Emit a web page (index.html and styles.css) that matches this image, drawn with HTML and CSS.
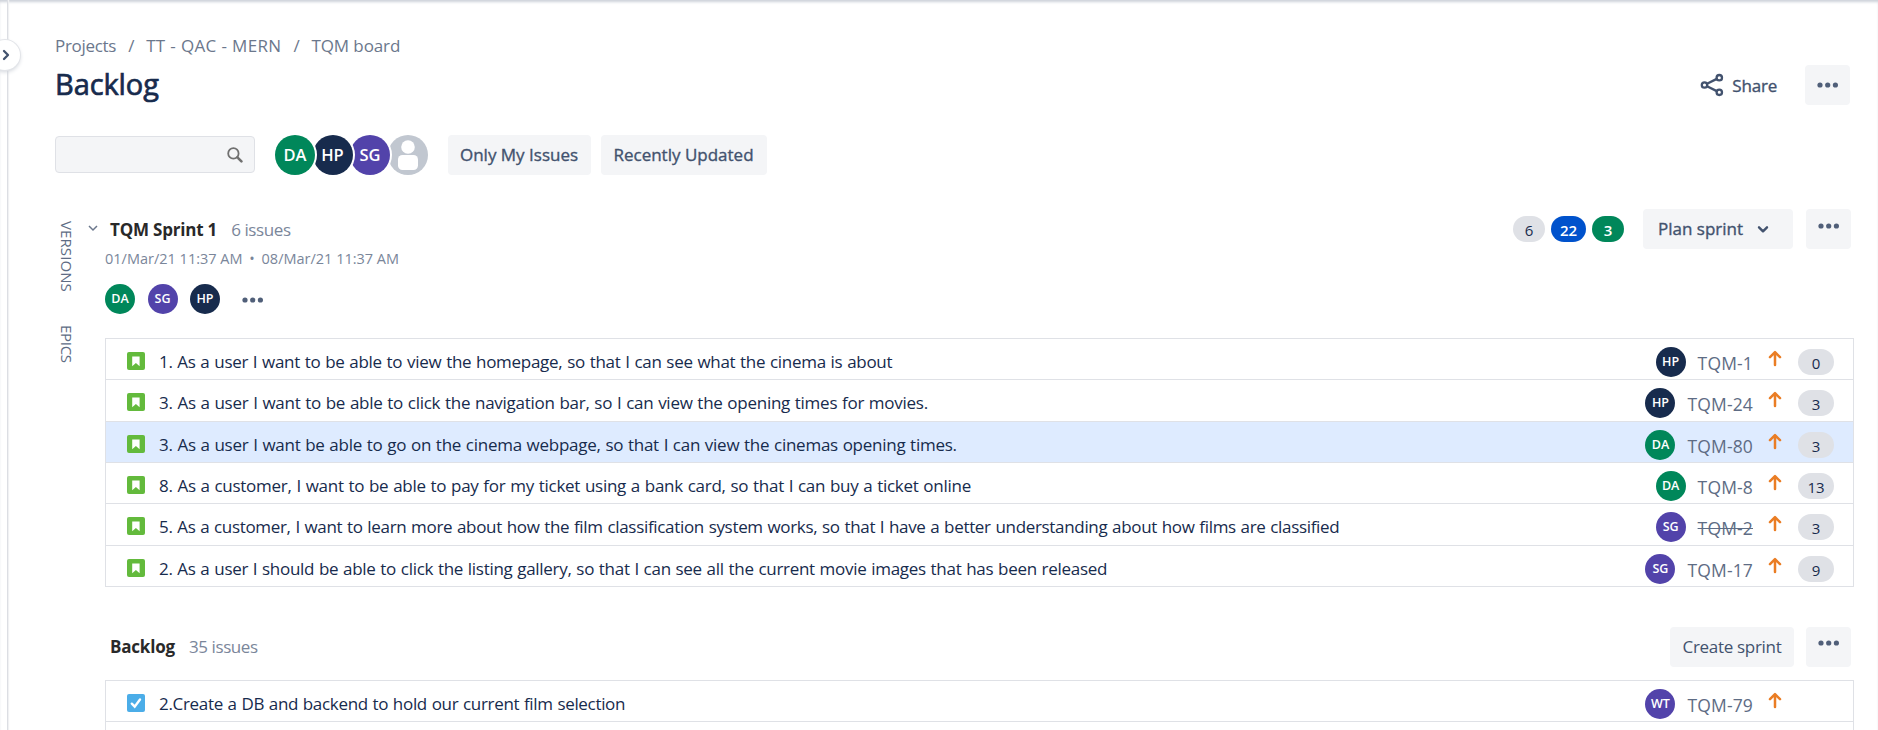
FILE: index.html
```html
<!DOCTYPE html>
<html lang="en">
<head>
<meta charset="utf-8">
<title>Backlog - TQM board</title>
<link rel="stylesheet" href="styles.css">
</head>
<body>
<svg class="defs" width="0" height="0">
  <symbol id="story" viewBox="0 0 18 18"><rect width="18" height="18" rx="2" fill="#63ba3c"/><path d="M5.2 4.4h7.4v9.8L8.9 10.900 5.2 14.200z" fill="#fff"/></symbol>
  <symbol id="task" viewBox="0 0 18 18"><rect width="18" height="18" rx="2" fill="#4bade8"/><path d="M4.800 9.700l2.900 3L13 5.500" fill="none" stroke="#fff" stroke-width="2.400" stroke-linecap="round"/></symbol>
  <symbol id="up" viewBox="0 0 14 17"><path d="M7 15V2.500M2 7.200l5-5 5 5" fill="none" stroke="#ea7d24" stroke-width="2.500" stroke-linecap="round" stroke-linejoin="round"/></symbol>
  <symbol id="dots" viewBox="0 0 22 6"><g fill="#505f79"><circle cx="3" cy="3" r="2.600"/><circle cx="10.700" cy="3" r="2.600"/><circle cx="18.400" cy="3" r="2.600"/></g></symbol>
</svg>
<div class="app">
  <aside class="rail"><button class="toggle" aria-label="Expand"><svg width="8" height="12" viewBox="0 0 8 12"><path d="M2 2l4 4-4 4" fill="none" stroke="#42526e" stroke-width="2.300" stroke-linecap="round" stroke-linejoin="round"/></svg></button></aside>
  <main class="main">
    <nav class="crumbs"><span class="c1">Projects</span><i>/</i><span class="c2">TT - QAC - MERN</span><i>/</i><span class="c3">TQM board</span></nav>
    <header class="head">
      <h1>Backlog</h1>
      <div class="share"><svg width="24" height="24" viewBox="0 0 24 24"><g fill="none" stroke="#42526e" stroke-width="2.300"><circle cx="4.500" cy="12" r="2.700"/><circle cx="19.300" cy="4.700" r="2.700"/><circle cx="19.300" cy="19.300" r="2.700"/><path d="M7 10.800l9.800-4.900M7 13.200l9.800 4.900"/></g></svg><span>Share</span></div>
      <button class="btn more"><svg class="dots"><use href="#dots"/></svg></button>
    </header>
    <div class="filters">
      <div class="search"><svg width="16" height="16" viewBox="0 0 16 16"><circle cx="6.400" cy="6.400" r="5.200" fill="none" stroke="#707070" stroke-width="1.800"/><path d="M10.400 10.400l4 4" stroke="#707070" stroke-width="2.600" stroke-linecap="round"/></svg></div>
      <div class="stack">
        <span class="av big da">DA</span><span class="av big hp">HP</span><span class="av big sg">SG</span><span class="av big none"><svg width="40" height="40" viewBox="0 0 40 40"><circle cx="20" cy="12" r="6.800" fill="#fff"/><rect x="10" y="20" width="20" height="15" rx="4.500" fill="#fff"/></svg></span>
      </div>
      <button class="btn only">Only My Issues</button>
      <button class="btn recent">Recently Updated</button>
    </div>
    <div class="board">
      <div class="tabs"><span>VERSIONS</span><span>EPICS</span></div>
      <div class="lists">
        <section>
          <div class="shead">
            <svg class="chev" width="12" height="8" viewBox="0 0 12 8"><path d="M2 2l4 4 4-4" fill="none" stroke="#6b778c" stroke-width="1.500"/></svg>
            <h2>TQM Sprint 1</h2><span class="count">6 issues</span>
            <div class="pills"><span class="pill">6</span><span class="pill blue">22</span><span class="pill green">3</span></div>
            <button class="btn plan">Plan sprint<svg width="12" height="9" viewBox="0 0 12 9"><path d="M2 2.300l4 4 4-4" fill="none" stroke="#42526e" stroke-width="2.400" stroke-linecap="round" stroke-linejoin="round"/></svg></button>
            <button class="btn more high"><svg class="dots"><use href="#dots"/></svg></button>
          </div>
          <div class="dates"><span>01/Mar/21 11:37 AM</span><b>•</b><span>08/Mar/21 11:37 AM</span></div>
          <div class="people"><span class="av da">DA</span><span class="av sg">SG</span><span class="av hp">HP</span><svg class="dots"><use href="#dots"/></svg></div>
          <ul class="issues">
            <li><svg class="type"><use href="#story"/></svg><span class="sum t1">1. As a user I want to be able to view the homepage, so that I can see what the cinema is about</span><span class="av hp">HP</span><span class="key">TQM-1</span><svg class="up"><use href="#up"/></svg><span class="pill">0</span></li>
            <li><svg class="type"><use href="#story"/></svg><span class="sum t2">3. As a user I want to be able to click the navigation bar, so I can view the opening times for movies.</span><span class="av hp">HP</span><span class="key">TQM-24</span><svg class="up"><use href="#up"/></svg><span class="pill">3</span></li>
            <li class="sel"><svg class="type"><use href="#story"/></svg><span class="sum t2">3. As a user I want be able to go on the cinema webpage, so that I can view the cinemas opening times.</span><span class="av da">DA</span><span class="key">TQM-80</span><svg class="up"><use href="#up"/></svg><span class="pill">3</span></li>
            <li><svg class="type"><use href="#story"/></svg><span class="sum t2">8. As a customer, I want to be able to pay for my ticket using a bank card, so that I can buy a ticket online</span><span class="av da">DA</span><span class="key">TQM-8</span><svg class="up"><use href="#up"/></svg><span class="pill">13</span></li>
            <li><svg class="type"><use href="#story"/></svg><span class="sum t3">5. As a customer, I want to learn more about how the film classification system works, so that I have a better understanding about how films are classified</span><span class="av sg">SG</span><span class="key done">TQM-2</span><svg class="up"><use href="#up"/></svg><span class="pill">3</span></li>
            <li><svg class="type"><use href="#story"/></svg><span class="sum t1">2. As a user I should be able to click the listing gallery, so that I can see all the current movie images that has been released</span><span class="av sg">SG</span><span class="key">TQM-17</span><svg class="up"><use href="#up"/></svg><span class="pill">9</span></li>
          </ul>
        </section>
        <section class="backlog">
          <div class="shead">
            <h2 class="bl">Backlog</h2><span class="count">35 issues</span>
            <button class="btn create">Create sprint</button>
            <button class="btn more high"><svg class="dots"><use href="#dots"/></svg></button>
          </div>
          <ul class="issues">
            <li><svg class="type"><use href="#task"/></svg><span class="sum t3">2.Create a DB and backend to hold our current film selection</span><span class="av sg">WT</span><span class="key">TQM-79</span><svg class="up"><use href="#up"/></svg><span class="pill empty"></span></li>
            <li></li>
          </ul>
        </section>
      </div>
    </div>
  </main>
</div>
</body>
</html>
```
FILE: styles.css
```css
* { box-sizing: border-box; }
body { margin: 0; background: #fff; color: #172b4d; font: 17px/24px "Open Sans", "Noto Sans", sans-serif; letter-spacing: -0.2px; }
h1, h2, ul { margin: 0; padding: 0; }
svg { display: block; flex: none; }
button { font: inherit; letter-spacing: inherit; border: 0; padding: 0; }
.defs { position: absolute; }
.app { display: flex; height: 730px; overflow: hidden; box-shadow: inset 0 3px 3px -1px #cdd1d9; }
.rail { position: relative; width: 8px; flex: none; border-right: 1px solid #dcdee3; box-shadow: 1px 0 1px #f0f1f3; }
.toggle { position: absolute; left: -10px; top: 40px; width: 30px; height: 30px; border-radius: 50%; background: #fff; box-shadow: 0 0 0 1px #e3e5e9, 0 2px 4px #cfd3da; display: flex; align-items: center; justify-content: flex-end; padding-right: 10px; }
.main { flex: 1; min-width: 0; padding: 34px 0 0 47px; }
.crumbs { display: flex; height: 24px; color: #6b778c; white-space: nowrap; }
.crumbs i { font-style: normal; width: 30px; text-align: center; }
.c1 { letter-spacing: -0.3px; }
.c2 { letter-spacing: 0.35px; }
.c3 { letter-spacing: -0.1px; }
.head { display: flex; align-items: center; height: 40px; margin: 7px 28px 0 0; }
h1 { font-size: 29px; line-height: 38px; margin-bottom: 2px; font-weight: 400; -webkit-text-stroke: 0.7px; letter-spacing: -0.1px; flex: 1; }
.share { display: flex; align-items: center; gap: 8px; margin-right: 28px; color: #42526e; -webkit-text-stroke: 0.35px; }
.share span { margin-top: 1px; }
.btn { height: 40px; border-radius: 4px; background: #f4f5f7; color: #42526e; letter-spacing: 0; -webkit-text-stroke: 0.35px; display: flex; align-items: center; justify-content: center; flex: none; }
.more { width: 45px; }
.dots { width: 22px; height: 6px; }
.high .dots { margin-bottom: 7px; }
.filters { display: flex; align-items: center; height: 40px; margin-top: 30px; }
.search { width: 200px; height: 37px; margin-bottom: 1px; border: 1px solid #dfe1e6; border-radius: 4px; background: #f4f5f7; display: flex; align-items: center; justify-content: flex-end; padding: 1px 11px 0 0; }
.av { width: 30px; height: 30px; border-radius: 50%; color: #fff; font-size: 12.500px; line-height: 30px; font-weight: 600; letter-spacing: 0; text-align: center; flex: none; }
.da { background: #00875a; }
.hp { background: #172b4d; }
.sg { background: #5243aa; }
.none { background: #c1c7d0; }
.stack { display: flex; margin: 0 22.500px 0 20px; }
.big { width: 40px; height: 40px; line-height: 40px; font-size: 16.500px; margin-right: -2.500px; position: relative; box-shadow: 0 0 0 2px #fff; }
.big:nth-child(1) { z-index: 4; }
.big:nth-child(2) { z-index: 3; }
.big:nth-child(3) { z-index: 2; }
.only { width: 143px; margin-right: 10px; }
.recent { width: 166px; }
.board { display: flex; margin-top: 34px; }
.tabs { width: 32px; padding: 12px 0 0 2px; display: flex; flex-direction: column; gap: 33px; }
.tabs span { writing-mode: vertical-rl; width: 20px; line-height: 20px; font-size: 15px; letter-spacing: 0.100px; color: #5e6c84; }
.tabs span + span { letter-spacing: -0.300px; }
.lists { flex: 1; min-width: 0; padding: 0 24px 0 18px; }
.shead { display: flex; align-items: center; height: 40px; margin-right: 3px; }
.chev { margin: 0 11px 2px -18px; }
h2 { font-size: 17px; line-height: 24px; color: #292929; font-weight: 700; letter-spacing: -0.200px; }
.shead h2 { margin-top: 1px; }
.bl { margin-left: 5px; }
.count { color: #7a869a; letter-spacing: -0.400px; margin: 1px auto 0 14px; }
.pills { display: flex; gap: 6px; margin: 0 19px 0 0; }
.pill { min-width: 32px; height: 26px; border-radius: 13px; background: #dfe1e6; color: #172b4d; font-size: 15px; line-height: 28px; text-align: center; flex: none; }
.blue { min-width: 35px; background: #0052cc; color: #fff; font-weight: 600; }
.green { background: #00875a; color: #fff; font-weight: 600; }
.plan { width: 150px; margin-right: 13px; gap: 14px; padding-right: 9px; }
.create { width: 124px; margin-right: 12px; letter-spacing: -0.300px; -webkit-text-stroke: 0; }
.dates { display: flex; height: 24px; margin-top: -2px; font-size: 14.500px; letter-spacing: 0; color: #7a869a; }
.dates b { font-weight: 400; width: 19px; text-align: center; }
.people { display: flex; align-items: center; gap: 12.500px; margin-top: 13px; }
.people .dots { margin: 2px 0 0 9px; }
.issues { list-style: none; margin-top: 24px; border: 1px solid #dfe1e6; border-bottom: 0; }
.issues li { display: flex; align-items: flex-start; height: 41.330px; border-bottom: 1px solid #dfe1e6; padding: 9px 19px 0 21px; }
.issues .sel { background: #deebff; }
.type { width: 18px; height: 18px; margin: 4px 14px 0 0; }
.sum { flex: 1; white-space: nowrap; margin-top: 2px; word-spacing: 0.600px; }
.t1 { letter-spacing: -0.285px; }
.t2 { letter-spacing: -0.263px; }
.t3 { letter-spacing: -0.320px; }
.issues .av { margin-top: -1px; }
.key { color: #5e6c84; font-size: 17.500px; letter-spacing: 0.150px; margin: 3px 15px 0 12px; }
.done { text-decoration: line-through; }
.up { width: 14px; height: 17px; margin: 2px 16px 0 0; }
.issues .pill { width: 36px; margin-top: 1px; }
.issues .empty { visibility: hidden; }
.backlog { margin-top: 40px; }
.backlog .issues { margin-top: 13px; }
```
